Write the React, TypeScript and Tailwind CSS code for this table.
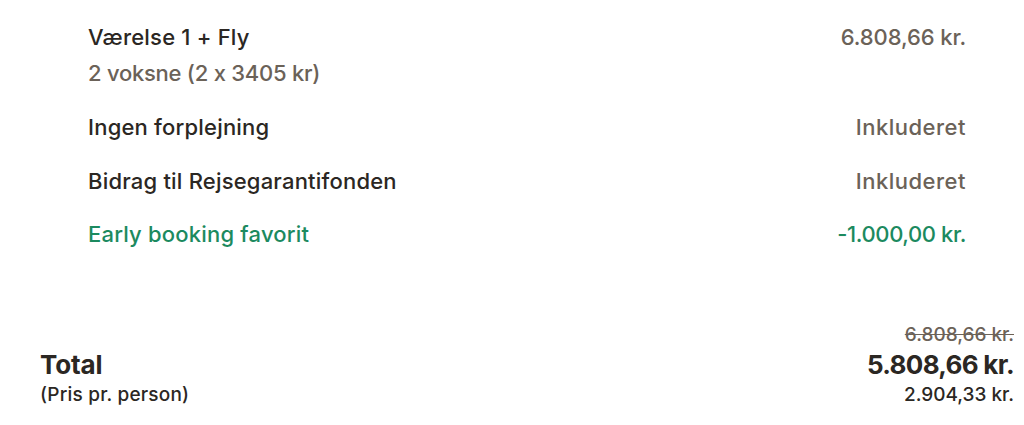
import React from 'react';

const rows = [
    { label: 'Ingen forplejning', value: 'Inkluderet' },
    { label: 'Bidrag til Rejsegarantifonden', value: 'Inkluderet' },
];

export default function App() {
    return (
        <main className="w-[1024px] h-[425px] bg-white pl-10 pr-[10px] pt-[22px] text-[#2b2723] font-medium" style={{ fontFamily: 'Inter, "Noto Sans", sans-serif' }}>
            <div className="px-12 text-[22px] leading-[30px] tracking-[0.2px]">
                <div className="flex justify-between">
                    <span>Værelse 1 + Fly</span>
                    <span className="text-[#6b6258] tracking-[-0.1px]">6.808,66 kr.</span>
                </div>
                <div className="mt-[6px] text-[#6b6258] tracking-[-0.25px]">2 voksne (2 x 3405 kr)</div>

                <div className="mt-6 flex flex-col gap-6">
                    {rows.map((r) => (
                        <div key={r.label} className="flex justify-between">
                            <span>{r.label}</span>
                            <span className="text-[#6b6258] tracking-[0.5px]">{r.value}</span>
                        </div>
                    ))}
                    <div className="-mt-px flex justify-between text-[#1c8a5f]">
                        <span>Early booking favorit</span>
                        <span className="tracking-[-0.4px]">-1.000,00 kr.</span>
                    </div>
                </div>
            </div>

            <div className="mt-[73px] flex justify-between items-end">
                <div>
                    <div className="text-[26px] leading-[30px] font-bold tracking-[-0.1px]">Total</div>
                    <div className="text-[19px] leading-[30px] tracking-[0.2px]">(Pris pr. person)</div>
                </div>
                <div className="text-right">
                    <div className="text-[19px] leading-[26px] line-through text-[#6b6258]">6.808,66 kr.</div>
                    <div className="mt-[2px] text-[26px] leading-[30px] font-bold tracking-[-0.7px]">5.808,66 kr.</div>
                    <div className="text-[19px] leading-[30px]">2.904,33 kr.</div>
                </div>
            </div>
        </main>
    );
}
